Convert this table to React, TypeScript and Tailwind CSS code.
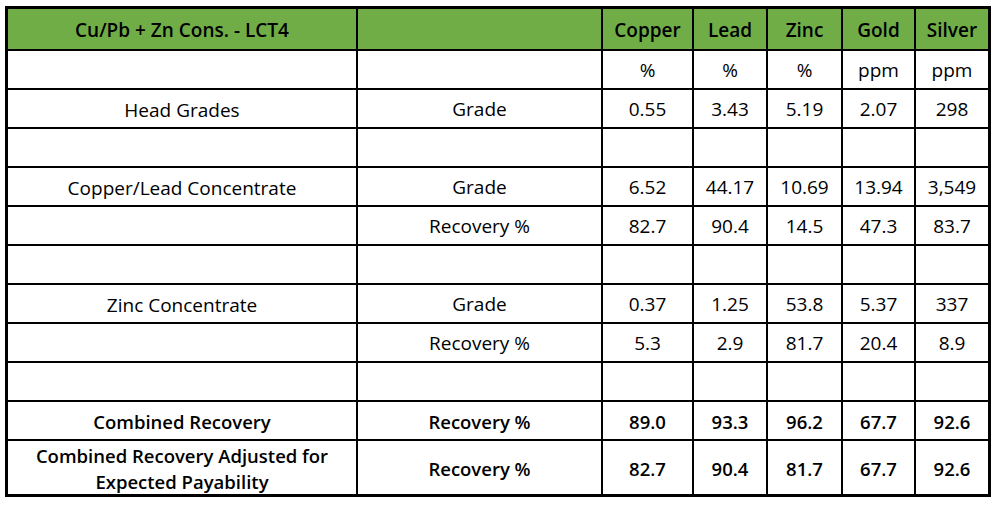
import React from "react";

const cols = "grid-cols-[348px_243px_89px_72px_73px_71px_72px]";

type Row = { a: string; b: string; v: string[]; bold?: boolean };

const rows: Row[] = [
  { a: "", b: "", v: ["%", "%", "%", "ppm", "ppm"] },
  { a: "Head Grades", b: "Grade", v: ["0.55", "3.43", "5.19", "2.07", "298"] },
  { a: "", b: "", v: ["", "", "", "", ""] },
  { a: "Copper/Lead Concentrate", b: "Grade", v: ["6.52", "44.17", "10.69", "13.94", "3,549"] },
  { a: "", b: "Recovery %", v: ["82.7", "90.4", "14.5", "47.3", "83.7"] },
  { a: "", b: "", v: ["", "", "", "", ""] },
  { a: "Zinc Concentrate", b: "Grade", v: ["0.37", "1.25", "53.8", "5.37", "337"] },
  { a: "", b: "Recovery %", v: ["5.3", "2.9", "81.7", "20.4", "8.9"] },
  { a: "", b: "", v: ["", "", "", "", ""] },
  { a: "Combined Recovery", b: "Recovery %", v: ["89.0", "93.3", "96.2", "67.7", "92.6"], bold: true },
  { a: "Combined Recovery Adjusted for\nExpected Payability", b: "Recovery %", v: ["82.7", "90.4", "81.7", "67.7", "92.6"], bold: true },
];

export default function App() {
  return (
    <div className="w-[1000px] h-[506px] bg-white pl-[5px] pt-[6px]" style={{ fontFamily: "'Open Sans', 'Noto Sans', sans-serif" }}>
      <div className={`grid ${cols} grid-rows-[40px_repeat(10,37px)_53px] gap-[2px] bg-black p-[3px] w-[986px] text-black text-[19px]`}>
        <div className="bg-[#70ad47] flex items-center justify-center font-semibold pt-[3px]">Cu/Pb + Zn Cons. - LCT4</div>
        <div className="bg-[#70ad47]"></div>
        {["Copper", "Lead", "Zinc", "Gold", "Silver"].map((h) => (
          <div key={h} className="bg-[#70ad47] flex items-center justify-center font-semibold pt-[3px]">{h}</div>
        ))}
        {rows.map((r, i) => (
          <React.Fragment key={i}>
            <div className={`bg-white flex items-center justify-center text-center whitespace-pre-line leading-[26px] pt-[2px] ${r.bold ? "font-semibold text-[18.5px]" : ""}`}>{r.a}</div>
            <div className={`bg-white flex items-center justify-center pt-[2px] ${r.bold ? "font-semibold text-[18.5px]" : ""}`}>{r.b}</div>
            {r.v.map((v, j) => (
              <div key={j} className={`bg-white flex items-center justify-center pt-[2px] ${r.bold ? "font-semibold text-[18.5px]" : ""}`}>{v}</div>
            ))}
          </React.Fragment>
        ))}
      </div>
    </div>
  );
}
